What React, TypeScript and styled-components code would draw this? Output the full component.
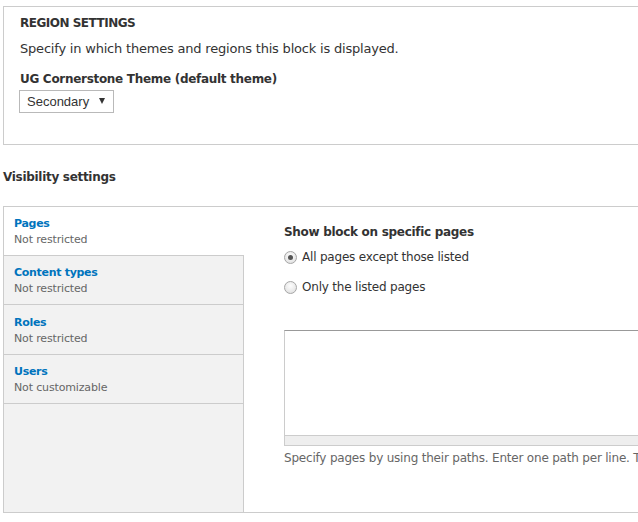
import React from 'react';
import styled, { createGlobalStyle } from 'styled-components';

const GlobalStyle = createGlobalStyle`
  body {
    margin: 0;
    overflow: hidden;
    background: #fff;
    color: #333;
    font-family: "DejaVu Sans", Verdana, sans-serif;
    font-size: 13px;
  }
`;

const Page = styled.div`
  width: 900px;
  padding: 6px 0 0 3px;
`;

const Fieldset = styled.div`
  border: 1px solid #ccc;
  padding: 7px 16px 31px;
`;

const Legend = styled.div`
  font-weight: bold;
  font-size: 12px;
  letter-spacing: -0.5px;
  text-transform: uppercase;
  line-height: 18px;
`;

const Description = styled.div`
  margin-top: 8px;
  line-height: 18px;
  letter-spacing: -0.2px;
`;

const Label = styled.div`
  margin-top: 12px;
  font-weight: bold;
  font-size: 12px;
  letter-spacing: -0.3px;
  line-height: 18px;
`;

const SelectBox = styled.div`
  margin: 2px 0 0 -1px;
  box-sizing: border-box;
  width: 95px;
  height: 23px;
  border: 1px solid #b9b9b9;
  display: flex;
  align-items: center;
  justify-content: space-between;
  padding: 0 8px 0 7px;
  font-family: "Liberation Sans", Arial, sans-serif;
  font-size: 13px;
  color: #333;
`;

const Caret = styled.span`
  width: 0;
  height: 0;
  border-left: 3.5px solid transparent;
  border-right: 3.5px solid transparent;
  border-top: 6px solid #333;
  margin-top: -1px;
`;

const SectionTitle = styled.div`
  margin-top: 23px;
  font-weight: bold;
  font-size: 12px;
  letter-spacing: -0.3px;
  line-height: 18px;
`;

const VerticalTabs = styled.div`
  margin-top: 20px;
  border: 1px solid #ccc;
  height: 305px;
  display: flex;
`;

const TabList = styled.div`
  width: 239px;
  flex-shrink: 0;
  background: #f2f2f2;
  border-right: 1px solid #ccc;
`;

const Tab = styled.div<{ $selected?: boolean; $extra?: number }>`
  padding: ${(p) => 8 + (p.$extra ?? 0)}px 10px 7px;
  border-bottom: 1px solid #ccc;
  background: ${(p) => (p.$selected ? '#fff' : 'transparent')};
  margin-right: ${(p) => (p.$selected ? '-1px' : '0')};
`;

const TabTitle = styled.div`
  color: #0074bd;
  font-weight: bold;
  font-size: 11px;
  letter-spacing: -0.3px;
  line-height: 17px;
`;

const TabSummary = styled.div`
  color: #666;
  font-size: 11px;
  letter-spacing: -0.15px;
  line-height: 16px;
`;

const Pane = styled.div`
  flex: 1;
  padding: 16px 0 0 40px;
`;

const PaneHeading = styled.div`
  font-weight: bold;
  font-size: 12px;
  letter-spacing: -0.3px;
  line-height: 18px;
`;

const Radios = styled.div`
  margin-top: 1px;
`;

const RadioRow = styled.label`
  display: flex;
  align-items: center;
  gap: 5px;
  height: 30px;
  font-size: 12px;
  letter-spacing: -0.2px;
  line-height: 18px;
`;

const RadioCircle = styled.span<{ $checked?: boolean }>`
  box-sizing: border-box;
  width: 13px;
  height: 13px;
  border-radius: 50%;
  border: 1px solid #a6a6a6;
  background: radial-gradient(circle at 50% 35%, #fdfdfd, #dcdcdc);
  display: flex;
  align-items: center;
  justify-content: center;
  &::after {
    content: '';
    display: ${(p) => (p.$checked ? 'block' : 'none')};
    width: 5px;
    height: 5px;
    border-radius: 50%;
    background: #555;
  }
`;

const TextArea = styled.div`
  margin-top: 28px;
  height: 104px;
  border: 1px solid #ccc;
  border-top-color: #999;
  border-bottom: none;
  background: #fff;
`;

const Grippie = styled.div`
  height: 9px;
  background: #eee;
  border: 1px solid #ccc;
`;

const HelpText = styled.div`
  margin-top: 4px;
  color: #666;
  font-size: 12px;
  letter-spacing: -0.2px;
  line-height: 16px;
  white-space: nowrap;
`;

const tabs = [
  { title: 'Pages', summary: 'Not restricted', extra: 0 },
  { title: 'Content types', summary: 'Not restricted', extra: 0 },
  { title: 'Roles', summary: 'Not restricted', extra: 1 },
  { title: 'Users', summary: 'Not customizable', extra: 0 },
];

export default function App() {
  return (
    <Page>
      <GlobalStyle />
      <Fieldset>
        <Legend>Region settings</Legend>
        <Description>Specify in which themes and regions this block is displayed.</Description>
        <Label>UG Cornerstone Theme (default theme)</Label>
        <SelectBox>
          Secondary
          <Caret />
        </SelectBox>
      </Fieldset>
      <SectionTitle>Visibility settings</SectionTitle>
      <VerticalTabs>
        <TabList>
          {tabs.map((t, i) => (
            <Tab key={t.title} $selected={i === 0} $extra={t.extra}>
              <TabTitle>{t.title}</TabTitle>
              <TabSummary>{t.summary}</TabSummary>
            </Tab>
          ))}
        </TabList>
        <Pane>
          <PaneHeading>Show block on specific pages</PaneHeading>
          <Radios>
            <RadioRow>
              <RadioCircle $checked />
              All pages except those listed
            </RadioRow>
            <RadioRow>
              <RadioCircle />
              Only the listed pages
            </RadioRow>
          </Radios>
          <TextArea />
          <Grippie />
          <HelpText>
            Specify pages by using their paths. Enter one path per line. The '*' character is a wildcard.
          </HelpText>
        </Pane>
      </VerticalTabs>
    </Page>
  );
}
